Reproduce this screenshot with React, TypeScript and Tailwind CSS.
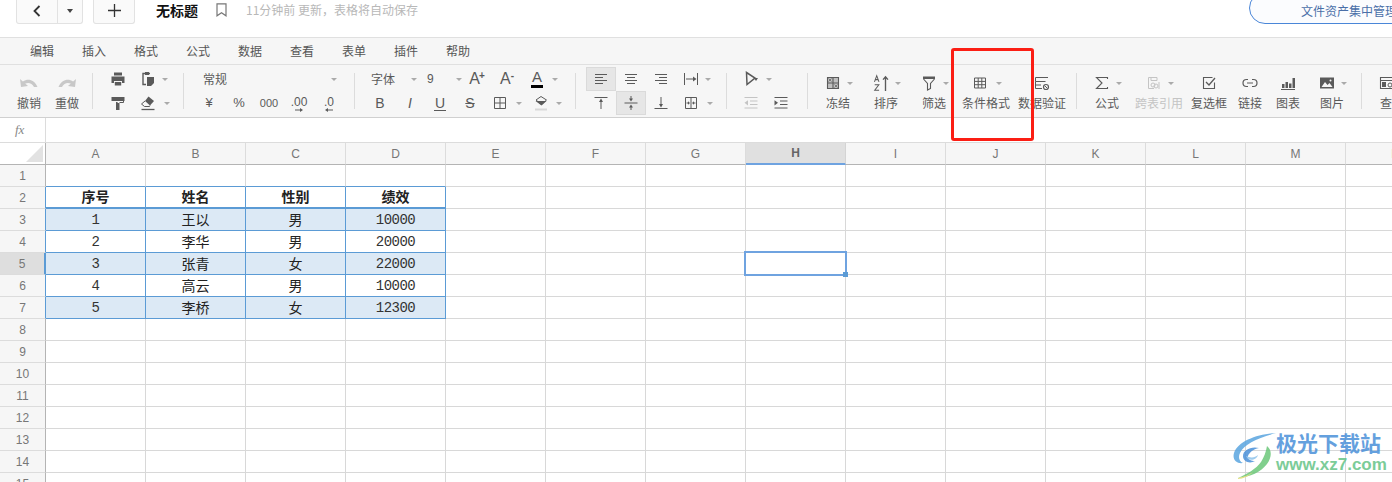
import React from "react";

const cjk = "font-['Noto_Sans_CJK_SC',sans-serif]";
const arial = "font-['Liberation_Sans',sans-serif]";

const menus = ["编辑", "插入", "格式", "公式", "数据", "查看", "表单", "插件", "帮助"];
const columns = ["A", "B", "C", "D", "E", "F", "G", "H", "I", "J", "K", "L", "M", "N"];
const rowNumbers = [1, 2, 3, 4, 5, 6, 7, 8, 9, 10, 11, 12, 13, 14, 15];

const tableRows: Record<number, string[]> = {
  2: ["序号", "姓名", "性别", "绩效"],
  3: ["1", "王以", "男", "10000"],
  4: ["2", "李华", "男", "20000"],
  5: ["3", "张青", "女", "22000"],
  6: ["4", "高云", "男", "10000"],
  7: ["5", "李桥", "女", "12300"],
};

const Svg = ({ children, size = 16 }: { children: React.ReactNode; size?: number }) => (
  <svg width={size} height={size} viewBox="0 0 16 16" fill="none" stroke="currentColor" strokeWidth="1">
    {children}
  </svg>
);

const Caret = ({ className = "" }: { className?: string }) => (
  <span className={`h-0 w-0 shrink-0 border-x-[3px] border-t-[3px] border-x-transparent border-t-[#aaaaaa] ${className}`} />
);

const Sep = () => <div className="h-[36px] w-px shrink-0 self-center bg-[#dcdcdc]" />;

const Cell = ({ children, active = false }: { children: React.ReactNode; active?: boolean }) => (
  <div
    className={`flex h-[24px] w-[30px] shrink-0 items-center justify-center ${
      active ? "border border-[#dadada] bg-[#e6e6e6]" : ""
    }`}
  >
    {children}
  </div>
);

const Row = ({ children, className = "" }: { children: React.ReactNode; className?: string }) => (
  <div className={`flex h-[24px] items-center ${className}`}>{children}</div>
);

const Group = ({ width, pad, children }: { width: string; pad: string; children: React.ReactNode }) => (
  <div className={`flex shrink-0 flex-col pt-[2px] ${width} ${pad}`}>{children}</div>
);

const Tall = ({
  width,
  label,
  icon,
  caret = false,
  muted = false,
  caretClass = "ml-[4px]",
}: {
  width: string;
  label: string;
  icon: React.ReactNode;
  caret?: boolean;
  muted?: boolean;
  caretClass?: string;
}) => (
  <div className={`flex shrink-0 flex-col items-center pt-[2px] ${width} ${muted ? "text-[#c4c4c4]" : "text-[#5a5a5a]"}`}>
    <div className="flex h-[24px] items-center justify-center whitespace-nowrap pt-[8px]">
      <span className="flex w-[20px] justify-center">{icon}</span>
      {caret && <Caret className={caretClass} />}
    </div>
    <div className="flex h-[24px] items-center whitespace-nowrap text-[12px]">{label}</div>
  </div>
);

const Undo = ({ flip = false }: { flip?: boolean }) => (
  <svg width="18" height="10" viewBox="0 0 18 10" className={flip ? "-scale-x-100" : ""} fill="#c8c8c8">
    <path d="M0 1 L1 9 L8 8 L5.200 5.600 C8 4.200 12 4.600 14 9 L17.500 9 C14.400 1.600 8 0 2.900 3.400 Z" />
  </svg>
);

const PrintIcon = () => (
  <Svg>
    <path fill="currentColor" stroke="none" d="M4 1.500h8v3H4z M1.500 5.500h13v6.500H12V10H4v2H1.500z M4.800 11h6.400v3.500H4.800z" />
  </Svg>
);
const PasteIcon = () => (
  <Svg>
    <path d="M10 2.500H3v11h3" strokeWidth="1.400" />
    <path fill="currentColor" stroke="none" d="M5 1h4v3H5z M7 6h7v6l-3 3H7z" />
  </Svg>
);
const RollerIcon = () => (
  <Svg>
    <path fill="currentColor" stroke="none" d="M1.500 2h13v4h-13z M6 7h1.600v1H6z M6 8h3.500v7H6z" />
    <path d="M9.500 7.500h4V6" />
  </Svg>
);
const EraserIcon = () => (
  <Svg>
    <path fill="currentColor" stroke="none" d="M8.500 1.500 14 6l-4 4.500L5 6z" />
    <path d="M5 6 1.500 9l3 2.500h5l.5-1" />
    <path d="M1.500 14.500h13" strokeWidth="1.300" />
  </Svg>
);
const Lines = ({ rows }: { rows: [number, number][] }) => (
  <Svg>
    {rows.map(([a, b], i) => (
      <path key={i} d={`M${a} ${3 + i * 3}.5H${b}`} />
    ))}
  </Svg>
);
const WrapIcon = () => (
  <Svg>
    <path d="M1.500 2v12M14.500 2v12M3 8h8" />
    <path fill="currentColor" stroke="none" d="M10 5.500 13.500 8 10 10.500z" />
  </Svg>
);
const TopIcon = () => (
  <Svg>
    <path d="M1.500 2.500h13M8 14V5.500" />
    <path fill="currentColor" stroke="none" d="M8 3.500 10 7H6z" />
  </Svg>
);
const MiddleIcon = () => (
  <Svg>
    <path d="M1.500 8h13M8 1v3M8 12v3" />
    <path fill="currentColor" stroke="none" d="M8 6.500 6 3.500h4zM8 9.500l2 3H6z" />
  </Svg>
);
const BottomIcon = () => (
  <Svg>
    <path d="M1.500 13.500h13M8 2v8.500" />
    <path fill="currentColor" stroke="none" d="M8 12.500 6 9h4z" />
  </Svg>
);
const MergeIcon = () => (
  <Svg>
    <path d="M2.500 2.500h11v11h-11zM8 2.500v11M3.500 8h2.500M10 8h2.500" />
    <path fill="currentColor" stroke="none" d="M7 8 5 6.300v3.400zM9 8l2-1.700v3.400z" />
  </Svg>
);
const BorderIcon = () => (
  <Svg>
    <path d="M2.500 2.500h11v11h-11zM8 2.500v11M2.500 8h11" />
  </Svg>
);
const FillIcon = () => (
  <Svg>
    <path d="M3 5 8 1.500 13.500 5l-5 4.500z" />
    <path fill="currentColor" stroke="none" d="M2.500 6h11L8.500 10.500z" />
    <path d="M2 14.500h12" stroke="#d8d8d8" strokeWidth="2" />
  </Svg>
);
const OrientIcon = () => (
  <Svg>
    <path d="M3.500 1.500 12 7 4 13.500z" strokeWidth="1.500" />
    <path fill="currentColor" stroke="none" d="M11 7h4l-2 3z" />
  </Svg>
);
const IndentIcon = ({ out = false }: { out?: boolean }) => (
  <Svg>
    <path d="M1.500 2.500h13M7 6h7.500M7 9.500h7.500M1.500 13h13" />
    <path fill="currentColor" stroke="none" d={out ? "M5 5.200V10.400L1.500 7.800z" : "M1.500 5.200V10.400L5 7.800z"} />
  </Svg>
);
const FreezeIcon = () => (
  <Svg>
    <path fill="currentColor" stroke="none" opacity=".35" d="M3 3h10v10H3z" />
    <path d="M2.500 2.500h11v11h-11zM8 2.500v11M2.500 8h11" strokeWidth="1.100" />
    <path strokeWidth=".7" d="M3.500 3.500l3 3M6.500 3.500l-3 3M9.500 9.500l3 3M12.500 9.500l-3 3" />
  </Svg>
);
const SortIcon = () => (
  <Svg size={18}>
    <path d="M12 15V2.500M9.800 5 12 2.500 14.200 5" strokeWidth="1.200" />
    <path strokeWidth=".9" d="M2.200 7 4.200 1.500 6.200 7M3 5h2.400M2.400 9.500h3.700L2.400 14.500h3.900" />
  </Svg>
);
const FilterIcon = () => (
  <Svg>
    <path fill="currentColor" stroke="none" d="M2 1.500h12v2.500H2z" />
    <path d="M2.500 4 6.500 8.500V15l3-1.500v-5L13.500 4" strokeWidth="1.100" />
  </Svg>
);
const GridIcon = () => (
  <Svg>
    <path d="M2.500 3h11v10h-11zM6.200 3v10M9.800 3v10M2.500 6.400h11M2.500 9.700h11" />
  </Svg>
);
const ValidIcon = () => (
  <Svg>
    <path d="M14 2.500H1.500v4h10M1.500 6.500v7h6.500M1.500 10h5.500" />
    <circle cx="12" cy="12" r="2.500" strokeWidth="1.200" />
    <path d="M10.500 10.500l3 3" />
  </Svg>
);
const SumIcon = () => (
  <Svg>
    <path d="M13.500 4V2.500h-11L8 8l-5.500 5.500h11V12" strokeWidth="1.100" />
  </Svg>
);
const RefIcon = () => (
  <Svg>
    <path d="M8 13.500H2.500v-11H11v3M5 2.500v3h6" />
    <circle cx="7" cy="10" r="2" />
    <circle cx="10" cy="11" r="2" />
    <path d="M13 7v7" />
  </Svg>
);
const CheckIcon = () => (
  <Svg>
    <path d="M13.500 7.500v6h-11v-11h9" strokeWidth="1.100" />
    <path d="M5 7l3 3 6-7" strokeWidth="1.300" />
  </Svg>
);
const LinkIcon = () => (
  <Svg>
    <path d="M6 4.500H4.500a3.500 3.500 0 0 0 0 7H6M10 4.500h1.500a3.500 3.500 0 0 1 0 7H10M5 8h6" strokeWidth="1.200" />
  </Svg>
);
const ChartIcon = () => (
  <Svg>
    <path d="M1 14.500h14" strokeWidth="1" />
    <path fill="currentColor" stroke="none" d="M2 9h2.500v4H2zM5.500 7H8v6H5.500zM9 8.500h2.500V13H9zM12.500 3H15v10h-2.500z" />
  </Svg>
);
const ImageIcon = () => (
  <Svg>
    <path fill="currentColor" stroke="none" d="M1 2.500h14v11H1z" />
    <path fill="#f5f5f5" stroke="none" d="M2.500 12 6 7l2.500 3 2-2 3 4z" />
    <circle cx="11.500" cy="5.500" r="1" fill="#f5f5f5" stroke="none" />
  </Svg>
);
const FindIcon = () => (
  <Svg>
    <path d="M1.500 2.500h13v11h-13zM1.500 5.500h13" strokeWidth="1.100" />
    <path fill="currentColor" stroke="none" d="M3 7h4v5H3z" />
    <circle cx="11" cy="10" r="2" />
  </Svg>
);
const BookmarkIcon = () => (
  <svg width="11" height="14" viewBox="0 0 11 14" fill="none" stroke="#777777" strokeWidth="1.200">
    <path d="M1 .8h9v12L5.500 9.800 1 12.800z" />
  </svg>
);

const DecimalLabel = ({ text, left = false }: { text: string; left?: boolean }) => (
  <span className="relative top-px flex flex-col items-center leading-[11px]">
    {text}
    <svg width="8" height="4" viewBox="0 0 8 4" fill="currentColor" className={left ? "-scale-x-100" : ""}>
      <path d="M0 1.500h5V0l3 2-3 2V2.500H0z" />
    </svg>
  </span>
);

const TitleBar = () => (
  <div className="flex h-[37px] shrink-0 items-start bg-white">
    <div className="ml-[16px] flex h-[24px] w-[67px] rounded-b-[3px] border border-t-0 border-[#e2e2e2] bg-[#fafafa]">
      <div className="flex w-[41px] items-center justify-center border-r border-[#e2e2e2] pb-[2px]">
        <svg width="8" height="12" viewBox="0 0 8 12" fill="none" stroke="#333333" strokeWidth="1.800">
          <path d="M6.500 1 1.500 6l5 5" />
        </svg>
      </div>
      <div className="flex flex-1 items-center justify-center pb-[2px]">
        <span className="h-0 w-0 border-x-[3.500px] border-t-[4px] border-x-transparent border-t-[#444444]" />
      </div>
    </div>
    <div className="ml-[10px] flex h-[24px] w-[42px] items-center justify-center rounded-b-[3px] border border-t-0 border-[#e2e2e2] bg-[#fafafa] pb-[2px]">
      <svg width="13" height="13" viewBox="0 0 13 13" stroke="#333333" strokeWidth="1.300">
        <path d="M6.500 0v13M0 6.500h13" />
      </svg>
    </div>
    <span className={`ml-[21px] text-[14px] leading-[20px] font-bold text-[#111111] ${cjk}`}>无标题</span>
    <span className="ml-[18px] mt-[3px] flex">
      <BookmarkIcon />
    </span>
    <span className={`ml-[19px] text-[12px] leading-[20px] whitespace-nowrap text-[#b8b8b8] ${cjk}`}>
      11分钟前 更新，表格将自动保存
    </span>
    <div className="relative ml-auto h-[24px] w-[143px] overflow-visible">
      <div
        className={`absolute left-0 -top-[8px] flex h-[32px] w-[180px] items-center rounded-full border border-[#4a86d8] bg-[#fbfcfe] pt-[5px] pl-[51px] text-[12px] whitespace-nowrap text-[#4a6fa8] ${cjk}`}
      >
        文件资产集中管理
      </div>
    </div>
  </div>
);

const MenuBar = () => (
  <div className={`flex h-[28px] shrink-0 items-center border-y border-[#e0e0e0] bg-[#f6f6f6] pl-[16px] text-[12px] text-[#555555] ${cjk}`}>
    {menus.map((m) => (
      <div key={m} className="w-[52px] text-center">
        {m}
      </div>
    ))}
  </div>
);

const Toolbar = () => (
  <div className={`flex h-[53px] shrink-0 overflow-hidden border-b border-[#d0d0d0] bg-[#f6f6f6] text-[#5a5a5a] ${cjk}`}>
    <div className="flex w-[92px] shrink-0 pl-[10px]">
      <Tall width="w-[38px]" label="撤销" icon={<Undo />} />
      <Tall width="w-[38px]" label="重做" icon={<Undo flip />} />
    </div>
    <Sep />
    <Group width="w-[90px]" pad="pl-[10px]">
      <Row>
        <Cell><PrintIcon /></Cell>
        <Cell><PasteIcon /></Cell>
        <Caret className="-ml-px" />
      </Row>
      <Row>
        <Cell><RollerIcon /></Cell>
        <Cell><EraserIcon /></Cell>
        <Caret className="ml-px" />
      </Row>
    </Group>
    <Sep />
    <Group width="w-[170px]" pad="pl-[10px]">
      <Row className="text-[12px]">
        <span className="ml-[9px] w-[130px]">常规</span>
        <Caret className="ml-[-2px]" />
      </Row>
      <Row className={`text-[12px] ${arial}`}>
        <Cell><span className="text-[13px]">¥</span></Cell>
        <Cell><span className="text-[13px]">%</span></Cell>
        <Cell><span className="text-[11px]">000</span></Cell>
        <Cell><DecimalLabel text=".00" /></Cell>
        <Cell><DecimalLabel text=".0" left /></Cell>
      </Row>
    </Group>
    <Sep />
    <Group width="w-[220px]" pad="pl-[10px]">
      <Row className="text-[12px]">
        <span className="ml-[6px] w-[24px]">字体</span>
        <Caret className="ml-[16px]" />
        <span className={`ml-[10px] w-[8px] ${arial}`}>9</span>
        <Caret className="ml-[21px]" />
        <Cell>
          <span className={`text-[16px] leading-none ${arial}`}>
            A<sup className="-ml-px text-[10px] font-bold">+</sup>
          </span>
        </Cell>
        <Cell>
          <span className={`text-[16px] leading-none ${arial}`}>
            A<sup className="text-[10px] font-bold">-</sup>
          </span>
        </Cell>
        <Cell>
          <span className={`flex flex-col items-center border-b-[3px] border-black pb-px text-[15px] leading-[14px] ${arial}`}>
            <span className="px-[1px]">A</span>
          </span>
        </Cell>
        <Caret />
      </Row>
      <Row className={`text-[15px] ${arial}`}>
        <Cell><span className="text-[14px]">B</span></Cell>
        <Cell><span className="text-[14px] italic">I</span></Cell>
        <Cell><span className="border-b border-[#5a5a5a] px-px text-[14px] leading-[14px]">U</span></Cell>
        <Cell><span className="text-[14px] line-through">S</span></Cell>
        <Cell><BorderIcon /></Cell>
        <Caret className="ml-px" />
        <span className="w-[4px]" />
        <Cell><FillIcon /></Cell>
        <Caret />
      </Row>
    </Group>
    <Sep />
    <Group width="w-[150px]" pad="pl-[10px]">
      <Row>
        <Cell active><Lines rows={[[2, 14], [2, 10], [2, 14], [2, 10]]} /></Cell>
        <Cell><Lines rows={[[2, 14], [4, 12], [2, 14], [4, 12]]} /></Cell>
        <Cell><Lines rows={[[2, 14], [6, 14], [2, 14], [6, 14]]} /></Cell>
        <Cell><WrapIcon /></Cell>
        <Caret className="-ml-px" />
      </Row>
      <Row>
        <Cell><TopIcon /></Cell>
        <Cell active><MiddleIcon /></Cell>
        <Cell><BottomIcon /></Cell>
        <Cell><MergeIcon /></Cell>
        <Caret className="ml-px" />
      </Row>
    </Group>
    <Sep />
    <Group width="w-[80px]" pad="pl-[9px]">
      <Row>
        <Cell><OrientIcon /></Cell>
        <Caret />
      </Row>
      <Row>
        <Cell><span className="text-[#c4c4c4]"><IndentIcon out /></span></Cell>
        <Cell><IndentIcon /></Cell>
      </Row>
    </Group>
    <Sep />
    <div className="flex w-[268px] shrink-0 pl-[6px]">
      <Tall width="w-[48px]" label="冻结" icon={<FreezeIcon />} caret />
      <Tall width="w-[48px]" label="排序" icon={<SortIcon />} caret />
      <Tall width="w-[48px]" label="筛选" icon={<FilterIcon />} caret />
      <Tall width="w-[56px]" label="条件格式" icon={<GridIcon />} caret caretClass="ml-[6px]" />
      <Tall width="w-[56px]" label="数据验证" icon={<ValidIcon />} />
    </div>
    <Sep />
    <div className="flex w-[284px] shrink-0 pl-[6px]">
      <Tall width="w-[48px]" label="公式" icon={<SumIcon />} caret />
      <Tall width="w-[56px]" label="跨表引用" icon={<RefIcon />} caret muted />
      <Tall width="w-[44px]" label="复选框" icon={<CheckIcon />} />
      <Tall width="w-[38px]" label="链接" icon={<LinkIcon />} />
      <Tall width="w-[38px]" label="图表" icon={<ChartIcon />} />
      <Tall width="w-[50px]" label="图片" icon={<ImageIcon />} caret />
    </div>
    <Sep />
    <div className="flex shrink-0 pl-[6px]">
      <Tall width="w-[48px]" label="查找" icon={<FindIcon />} caret />
    </div>
  </div>
);

const FormulaBar = () => (
  <div className="flex h-[25px] shrink-0 border-b border-[#dcdcdc] bg-white">
    <div className="flex w-[46px] items-center border-r border-[#dcdcdc] bg-white pl-[15px] font-['Liberation_Serif',serif] text-[13px] text-[#888888] italic">
      fx
    </div>
  </div>
);

const Sheet = () => (
  <div className="grid grid-cols-[46px_repeat(14,100px)] auto-rows-[22px]">
    <div className="relative border-r border-b border-[#b4b4b4] bg-white">
      <span className="absolute right-[2px] bottom-[2px] h-0 w-0 border-b-[17px] border-l-[17px] border-b-[#e2e2e2] border-l-transparent" />
    </div>
    {columns.map((c) => (
      <div
        key={c}
        className={`flex items-center justify-center text-[12px] ${arial} ${
          c === "H"
            ? "border-r border-b-2 border-r-[#d4d4d4] border-b-[#6fa3e0] bg-[#e0e0e0] font-bold text-[#666666]"
            : "border-r border-b border-r-[#dcdcdc] border-b-[#b4b4b4] bg-[#f6f6f6] text-[#777777]"
        }`}
      >
        {c}
      </div>
    ))}
    {rowNumbers.map((r) => {
      const data = tableRows[r];
      const inTable = r >= 2 && r <= 7;
      return (
        <React.Fragment key={r}>
          <div
            className={`flex items-center justify-center border-b border-b-[#dcdcdc] text-[12px] text-[#777777] ${arial} ${
              r === 5 ? "border-r-2 border-r-[#5b9bd5] bg-[#dedede]" : "border-r bg-[#f6f6f6]"
            } ${inTable && r !== 5 ? "border-r-[#5b9bd5]" : ""} ${!inTable ? "border-r-[#b4b4b4]" : ""}`}
          >
            {r}
          </div>
          {columns.map((c, i) => {
            const value = data && i < 4 ? data[i] : undefined;
            const blue = inTable && i < 4;
            const numeric = value !== undefined && /^\d+$/.test(value);
            const tint = (r === 3 || r === 5 || r === 7) && i < 4;
            return (
              <div
                key={c}
                className={`relative flex items-center justify-center border-r border-b ${
                  blue ? "border-r-[#5b9bd5]" : "border-r-[#d8d8d8]"
                } ${
                  r === 2 && i < 4
                    ? "border-b-2 border-b-[#5b9bd5]"
                    : blue || (r === 1 && i < 4)
                      ? "border-b-[#5b9bd5]"
                      : "border-b-[#d8d8d8]"
                } ${tint ? "bg-[#dce9f5]" : "bg-white"} ${r === 2 ? "font-bold" : ""} ${
                  numeric
                    ? "pt-px font-['Liberation_Mono',monospace] text-[14px] tracking-[-0.5px] text-[#333333]"
                    : `pb-px text-[14px] text-[#222222] ${cjk}`
                }`}
              >
                {value}
                {c === "H" && r === 5 && (
                  <span className="absolute -top-[2px] -left-[2px] z-10 h-[25px] w-[103px] border-2 border-[#6fa3e0]">
                    <span className="absolute -right-[3px] -bottom-[3px] h-[5px] w-[5px] bg-[#5b9bd5]" />
                  </span>
                )}
              </div>
            );
          })}
        </React.Fragment>
      );
    })}
  </div>
);

const Watermark = () => (
  <div className="pointer-events-none absolute top-[430px] left-[1232px] flex w-[160px] items-start opacity-85">
    <svg width="46" height="50" viewBox="0 0 46 50" fill="none" className="mt-[1px] shrink-0">
      <path d="M44 2C26 3 6 10 2 22c-2 7 3 11 9 10-4-2-5-6-3-10C12 13 26 7 44 2z" fill="#5aa5e0" />
      <path d="M27 17c-8-2-16 2-16 8s7 8 12 5c-4 0-8-2-7-5s5-7 11-8z" fill="#4a90d9" />
      <path d="M14 25c4 2 9 2 12-1-1 4-6 6-10 4z" fill="#8fc4ec" />
      <path d="M35 15c5 4 5 11 0 18C29 41 18 46 6 47c9-4 18-9 23-16 3-5 5-10 6-16z" fill="#6cc77a" />
      <path d="M6 47c6-1 11-3 15-6-4 4-10 7-15 7z" fill="#e4dc6c" />
    </svg>
    <div className="-ml-[2px] flex flex-col">
      <span className={`text-[21px] leading-[24px] font-bold whitespace-nowrap text-[#4a90d9] ${cjk}`}>极光下载站</span>
      <span className={`mt-[2px] text-[17px] leading-[18px] font-bold whitespace-nowrap text-[#66c487] ${arial}`}>www.xz7.com</span>
    </div>
  </div>
);

export default function App() {
  return (
    <div className="relative flex h-[482px] w-[1392px] flex-col overflow-hidden bg-white">
      <TitleBar />
      <MenuBar />
      <Toolbar />
      <FormulaBar />
      <Sheet />
      <div className="pointer-events-none absolute top-[48px] left-[951px] h-[93px] w-[83px] rounded-[3px] border-[3px] border-[#fb1e14]" />
      <Watermark />
    </div>
  );
}
